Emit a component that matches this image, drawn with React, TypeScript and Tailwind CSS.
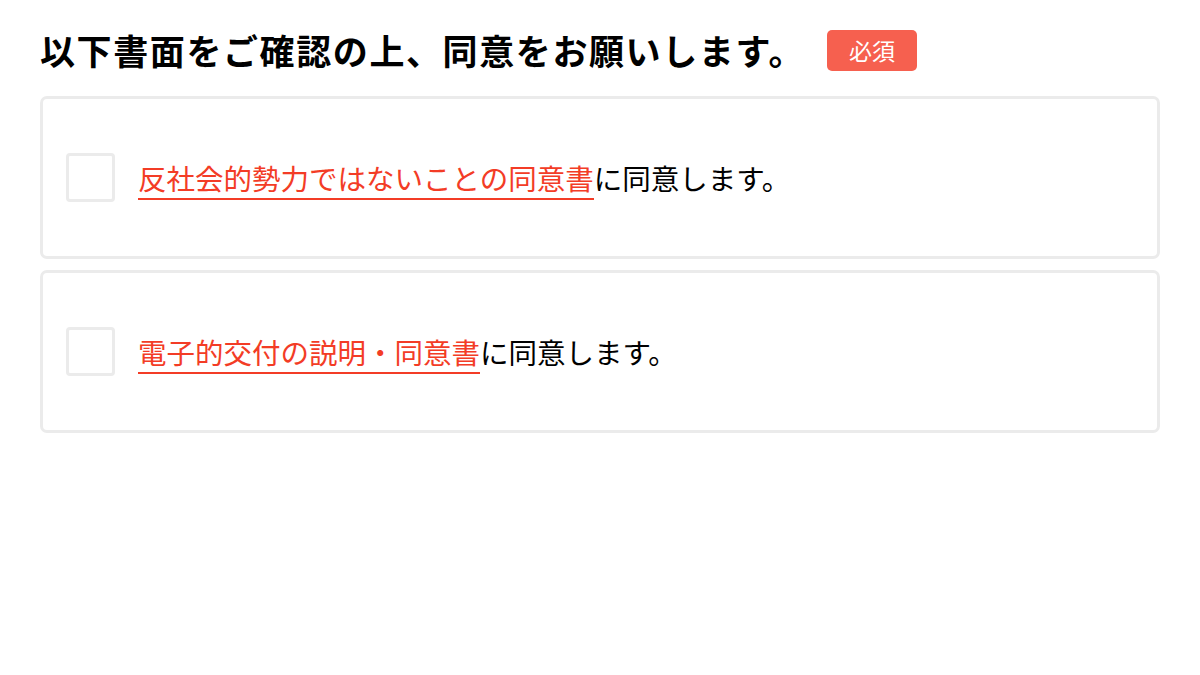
import React from "react";

const font = { fontFamily: '"Noto Sans CJK JP", "Noto Sans", sans-serif' };

function Row({ link }: { link: string }) {
  return (
    <div className="flex h-[163px] items-center rounded-[7px] border-[3px] border-[#ebebeb] bg-white pl-[23px]">
      <div className="h-[49px] w-[49px] shrink-0 rounded-[4px] border-[3px] border-[#ebebeb] bg-white" />
      <div className="ml-[23px] mt-[6px] flex items-center text-[28.5px] leading-[1.2] text-black">
        <span className="border-b-2 border-[#f33c26] pb-[3px] text-[#f33c26]">{link}</span>
        <span className="pb-[5px]">に同意します。</span>
      </div>
    </div>
  );
}

export default function App() {
  return (
    <div className="min-h-[675px] w-[1200px] bg-white px-[40px] pt-[26px]" style={font}>
      <div className="flex items-center">
        <h1 className="text-[35px] font-bold leading-[48px] tracking-[1.6px] text-black">以下書面をご確認の上、同意をお願いします。</h1>
        <span className="ml-[22px] flex h-[41px] w-[90px] items-center justify-center rounded-[5px] bg-[#f6604f] text-[23px] font-normal text-white">
          必須
        </span>
      </div>
      <div className="mt-[22px] flex flex-col gap-[11px]">
        <Row link="反社会的勢力ではないことの同意書" />
        <Row link="電子的交付の説明・同意書" />
      </div>
    </div>
  );
}
